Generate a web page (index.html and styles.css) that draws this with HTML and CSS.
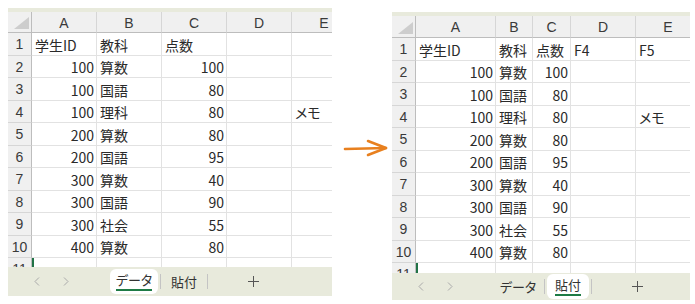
FILE: index.html
```html
<!DOCTYPE html>
<html lang="ja">
<head>
    <meta charset="UTF-8">
    <meta name="viewport" content="width=device-width, initial-scale=1.0">
    <title>シート比較</title>
    <link rel="stylesheet" href="styles.css">
</head>
<body>
    <div class="page">
        <!-- before -->
        <div class="sheet sheet-before">
            <div class="strip"></div>
            <div class="grid">
                <div class="hd corner"><svg width="15" height="12" viewBox="0 0 15 12"><polygon points="15,0 15,12 0,12" fill="#cdcdcd"/></svg></div>
                <div class="hd">A</div><div class="hd">B</div><div class="hd">C</div><div class="hd">D</div><div class="hd">E</div>

                <div class="rh">1</div><div class="c">学生ID</div><div class="c">教科</div><div class="c">点数</div><div class="c"></div><div class="c"></div>
                <div class="rh">2</div><div class="c n">100</div><div class="c">算数</div><div class="c n">100</div><div class="c"></div><div class="c"></div>
                <div class="rh">3</div><div class="c n">100</div><div class="c">国語</div><div class="c n">80</div><div class="c"></div><div class="c"></div>
                <div class="rh">4</div><div class="c n">100</div><div class="c">理科</div><div class="c n">80</div><div class="c"></div><div class="c">メモ</div>
                <div class="rh">5</div><div class="c n">200</div><div class="c">算数</div><div class="c n">80</div><div class="c"></div><div class="c"></div>
                <div class="rh">6</div><div class="c n">200</div><div class="c">国語</div><div class="c n">95</div><div class="c"></div><div class="c"></div>
                <div class="rh">7</div><div class="c n">300</div><div class="c">算数</div><div class="c n">40</div><div class="c"></div><div class="c"></div>
                <div class="rh">8</div><div class="c n">300</div><div class="c">国語</div><div class="c n">90</div><div class="c"></div><div class="c"></div>
                <div class="rh">9</div><div class="c n">300</div><div class="c">社会</div><div class="c n">55</div><div class="c"></div><div class="c"></div>
                <div class="rh">10</div><div class="c n">400</div><div class="c">算数</div><div class="c n">80</div><div class="c"></div><div class="c"></div>
                <div class="rh">11</div><div class="c sel"></div><div class="c"></div><div class="c"></div><div class="c"></div><div class="c"></div>
            </div>
            <div class="tabbar">
                <div class="nav">
                    <svg width="6" height="9" viewBox="0 0 6 9"><polyline points="5,0.5 1,4.5 5,8.5" fill="none" stroke="#a9a9a9" stroke-width="1"/></svg>
                    <svg width="6" height="9" viewBox="0 0 6 9"><polyline points="1,0.5 5,4.5 1,8.5" fill="none" stroke="#a9a9a9" stroke-width="1"/></svg>
                </div>
                <div class="tab tab-data active"><span>データ</span></div>
                <div class="sep"></div>
                <div class="tab tab-paste"><span>貼付</span></div>
                <div class="sep"></div>
                <div class="add"><svg width="11" height="11" viewBox="0 0 11 11"><path d="M5.5 0v11M0 5.5h11" stroke="#555" stroke-width="1"/></svg></div>
            </div>
        </div>

        <svg class="arrow" width="60" height="304" viewBox="0 0 60 304">
            <path d="M13 149 L54 148" stroke="#e8801f" stroke-width="2.6" fill="none" stroke-linecap="round"/>
            <path d="M36 141 L54 148 L36 155" stroke="#e8801f" stroke-width="2.6" fill="none" stroke-linecap="round" stroke-linejoin="round"/>
        </svg>

        <!-- after -->
        <div class="sheet sheet-after">
            <div class="strip"></div>
            <div class="grid">
                <div class="hd corner"><svg width="15" height="12" viewBox="0 0 15 12"><polygon points="15,0 15,12 0,12" fill="#cdcdcd"/></svg></div>
                <div class="hd">A</div><div class="hd">B</div><div class="hd">C</div><div class="hd">D</div><div class="hd">E</div>

                <div class="rh">1</div><div class="c">学生ID</div><div class="c">教科</div><div class="c">点数</div><div class="c">F4</div><div class="c">F5</div>
                <div class="rh">2</div><div class="c n">100</div><div class="c">算数</div><div class="c n">100</div><div class="c"></div><div class="c"></div>
                <div class="rh">3</div><div class="c n">100</div><div class="c">国語</div><div class="c n">80</div><div class="c"></div><div class="c"></div>
                <div class="rh">4</div><div class="c n">100</div><div class="c">理科</div><div class="c n">80</div><div class="c"></div><div class="c">メモ</div>
                <div class="rh">5</div><div class="c n">200</div><div class="c">算数</div><div class="c n">80</div><div class="c"></div><div class="c"></div>
                <div class="rh">6</div><div class="c n">200</div><div class="c">国語</div><div class="c n">95</div><div class="c"></div><div class="c"></div>
                <div class="rh">7</div><div class="c n">300</div><div class="c">算数</div><div class="c n">40</div><div class="c"></div><div class="c"></div>
                <div class="rh">8</div><div class="c n">300</div><div class="c">国語</div><div class="c n">90</div><div class="c"></div><div class="c"></div>
                <div class="rh">9</div><div class="c n">300</div><div class="c">社会</div><div class="c n">55</div><div class="c"></div><div class="c"></div>
                <div class="rh">10</div><div class="c n">400</div><div class="c">算数</div><div class="c n">80</div><div class="c"></div><div class="c"></div>
                <div class="rh">11</div><div class="c sel"></div><div class="c"></div><div class="c"></div><div class="c"></div><div class="c"></div>
            </div>
            <div class="tabbar">
                <div class="nav">
                    <svg width="6" height="9" viewBox="0 0 6 9"><polyline points="5,0.5 1,4.5 5,8.5" fill="none" stroke="#a9a9a9" stroke-width="1"/></svg>
                    <svg width="6" height="9" viewBox="0 0 6 9"><polyline points="1,0.5 5,4.5 1,8.5" fill="none" stroke="#a9a9a9" stroke-width="1"/></svg>
                </div>
                <div class="tab tab-data"><span>データ</span></div>
                <div class="sep"></div>
                <div class="tab tab-paste active"><span>貼付</span></div>
                <div class="sep"></div>
                <div class="add"><svg width="11" height="11" viewBox="0 0 11 11"><path d="M5.5 0v11M0 5.5h11" stroke="#555" stroke-width="1"/></svg></div>
            </div>
        </div>
    </div>
</body>
</html>
```

FILE: styles.css
```css
* {
    margin: 0;
    padding: 0;
    box-sizing: border-box;
}

body {
    background: #fff;
    font-family: "Noto Sans CJK JP", "Noto Sans", sans-serif;
    font-feature-settings: "palt";
    color: #222;
}

.page {
    display: flex;
    align-items: flex-start;
    padding-left: 8px;
    height: 304px;
    overflow: hidden;
}

.sheet {
    overflow: hidden;
    flex: none;
}

.sheet-before {
    width: 324px;
    margin-top: 8px;
}

.sheet-after {
    width: 298px;
    margin-top: 12px;
}

.strip {
    height: 4px;
    background: #e8eadc;
}

.grid {
    display: grid;
    grid-auto-rows: 22.5px;
    overflow: hidden;
    font-size: 14px;
}

.sheet-before .grid {
    grid-template-columns: 24px 65px 65px 65px 65px 65px;
    grid-template-rows: 21px;
    height: 255px;
}

.sheet-after .grid {
    grid-template-columns: 24px 80px 37px 38px 65px 65px;
    grid-template-rows: 22px;
    height: 257px;
}

.hd {
    background: #f0f0f0;
    border-right: 1px solid #d6d6d6;
    border-bottom: 1px solid #bdbdbd;
    display: flex;
    align-items: center;
    justify-content: center;
    color: #3a3a3a;
    font-family: "Liberation Sans", sans-serif;
    font-size: 14px;
    padding-top: 1px;
}

.hd.corner {
    align-items: flex-end;
    justify-content: flex-end;
    padding: 0 2px 3px 0;
    border-right-color: #bdbdbd;
}

.rh {
    background: #f0f0f0;
    border-right: 1px solid #bdbdbd;
    border-bottom: 1px solid #d6d6d6;
    display: flex;
    align-items: center;
    justify-content: center;
    color: #3a3a3a;
    font-family: "Liberation Sans", sans-serif;
    font-size: 14px;
    padding-top: 1px;
}

.c {
    border-right: 1px solid #e2e2e2;
    border-bottom: 1px solid #e2e2e2;
    display: flex;
    align-items: center;
    padding: 2px 3px 0;
    white-space: nowrap;
    color: #2a2a2a;
}

.c.n {
    justify-content: flex-end;
    padding-right: 2px;
}

.c.sel {
    box-shadow: inset 2px 0 0 #217346;
}

.tabbar {
    display: flex;
    align-items: center;
    background: #e8eadc;
    font-size: 13px;
}

.sheet-before .tabbar {
    height: 29px;
}

.sheet-after .tabbar {
    height: 27px;
}

.nav {
    width: 102px;
    flex: none;
    display: flex;
    gap: 23px;
    padding-left: 26px;
    align-items: center;
}

.tab {
    flex: none;
    height: 25px;
    display: flex;
    align-items: center;
    justify-content: center;
    color: #333;
}

.tab-data {
    width: 48px;
}

.tab-paste {
    width: 42px;
}

.sep {
    flex: none;
    width: 1px;
    height: 15px;
    background: #c4c4c4;
    margin: 0 2px;
}

.tab.active {
    background: #fff;
    border-radius: 6px;
}

.tab.active span {
    border-bottom: 2px solid #1e7b45;
    line-height: 15px;
    padding-bottom: 2px;
}

.add {
    flex: none;
    width: 86px;
    display: flex;
    justify-content: center;
    align-items: center;
}

.arrow {
    flex: none;
    display: block;
}
```
